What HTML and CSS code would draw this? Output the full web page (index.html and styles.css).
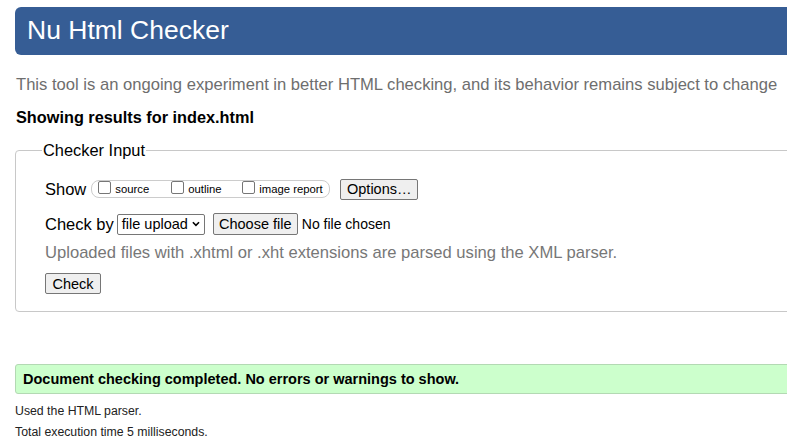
FILE: index.html
```html
<!DOCTYPE html>
<html>
<head>
<meta charset="utf-8">
<link rel="stylesheet" href="styles.css">
</head>
<body>
<div class="page">
  <h1 class="banner">Nu Html Checker</h1>
  <p class="intro">This tool is an ongoing experiment in better HTML checking, and its behavior remains subject to change</p>
  <p class="showing">Showing results for index.html</p>
  <fieldset class="input">
    <legend class="legend">Checker Input</legend>
    <div class="row show-row">
      <span class="lbl">Show</span>
      <span class="pill">
        <label class="opt"><span class="cb"></span>source</label>
        <label class="opt"><span class="cb"></span>outline</label>
        <label class="opt"><span class="cb"></span>image report</label>
      </span>
      <span class="btn">Options…</span>
    </div>
    <div class="row by-row">
      <span class="lbl">Check by</span>
      <span class="select">file upload <svg class="chev" width="9" height="6" viewBox="0 0 9 6"><path d="M1 1 L4.5 4.5 L8 1" fill="none" stroke="#000" stroke-width="1.8"/></svg></span>
      <span class="btn file-btn">Choose file</span>
      <span class="nofile">No file chosen</span>
    </div>
    <p class="hint">Uploaded files with .xhtml or .xht extensions are parsed using the XML parser.</p>
    <span class="btn check-btn">Check</span>
  </fieldset>
  <p class="success">Document checking completed. No errors or warnings to show.</p>
  <p class="details first">Used the HTML parser.</p>
  <p class="details">Total execution time 5 milliseconds.</p>
</div>
</body>
</html>
```

FILE: styles.css
```css
html, body {
  margin: 0;
  padding: 0;
  background: #fff;
  overflow: hidden;
}
body {
  font-family: "Liberation Sans", Arial, sans-serif;
  color: #000;
}
.page {
  width: 830px;
  padding: 7px 0 0 15px;
}
.banner {
  margin: 0;
  height: 48px;
  line-height: 47px;
  background: #365d95;
  color: #fff;
  font-size: 26.5px;
  font-weight: normal;
  padding-left: 12px;
  border-radius: 6px;
}
.intro {
  margin: 20px 0 0 1px;
  font-size: 16.6px;
  line-height: 20px;
  color: #6e6e6e;
}
.showing {
  margin: 13px 0 0 1px;
  font-size: 16.3px;
  font-weight: bold;
  line-height: 18px;
}
.input {
  margin: 15px 0 0 0;
  padding: 19px 29px 17px 29px;
  border: 1px solid #c8c8c8;
  border-radius: 4px;
  height: 133px;
}
.legend {
  font-size: 16.4px;
  padding: 0 1px;
  margin-left: -3px;
  line-height: 18px;
}
.row {
  display: flex;
  align-items: center;
  white-space: nowrap;
}
.lbl {
  font-size: 16.5px;
}
.show-row {
  height: 22px;
}
.pill {
  display: inline-flex;
  align-items: center;
  margin-left: 5px;
  height: 16px;
  border: 1px solid #ccc;
  border-radius: 8px;
  padding: 0 6px 0 6px;
  width: 225px;
}
.opt {
  display: inline-flex;
  align-items: center;
  font-size: 11.3px;
}
.opt:nth-child(1) { width: 73px; }
.opt:nth-child(2) { width: 71px; }
.cb {
  display: inline-block;
  width: 11px;
  height: 11px;
  border: 1px solid #767676;
  border-radius: 2px;
  margin-right: 4px;
  margin-top: -4px;
  background: #fff;
}
.btn {
  display: inline-flex;
  align-items: center;
  justify-content: center;
  box-sizing: border-box;
  font-size: 14.5px;
  border: 1px solid #767676;
  border-radius: 2px;
  background: #efefef;
  padding: 0 4px;
  height: 21px;
  white-space: nowrap;
}
.show-row .btn {
  margin-left: 10px;
  width: 78px;
  height: 21px;
}
.by-row {
  margin-top: 13px;
  height: 22px;
}
.select {
  display: inline-flex;
  align-items: center;
  box-sizing: border-box;
  margin-left: 3px;
  height: 21px;
  width: 88px;
  border: 1px solid #767676;
  border-radius: 2px;
  font-size: 14.5px;
  padding: 0 4px;
  gap: 4px;
}
.file-btn {
  margin-left: 8px;
  width: 85px;
  height: 22px;
}
.nofile {
  font-size: 14px;
  margin-left: 4px;
}
.hint {
  margin: 8px 0 0 0;
  font-size: 16.6px;
  line-height: 20px;
  color: #777;
}
.check-btn {
  margin-top: 10px;
  width: 56px;
  height: 21px;
}
.success {
  margin: 52px 0 0 0;
  height: 30px;
  box-sizing: border-box;
  line-height: 28px;
  background: #ccffcc;
  border: 1px solid #b3d9b3;
  border-radius: 3px;
  font-size: 14.5px;
  font-weight: bold;
  padding-left: 7px;
}
.details {
  margin: 5px 0 0 0;
  font-size: 12.3px;
  line-height: 16px;
  color: #222;
}
.details.first {
  margin-top: 9px;
}
```
